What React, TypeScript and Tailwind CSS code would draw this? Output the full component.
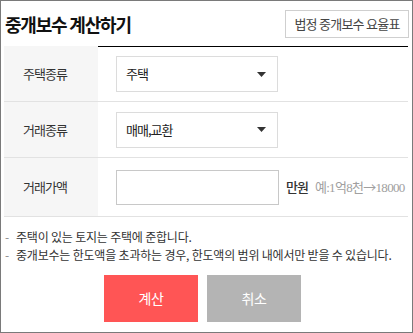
import React from 'react'

const ko = { fontFamily: '"Noto Sans CJK KR", "Noto Sans", sans-serif' }

function Caret() {
    return (
        <svg width="9" height="5" viewBox="0 0 9 5" className="block">
            <path d="M0 0h9L4.5 5z" fill="#333" />
        </svg>
    )
}

function SelectBox({ value }: { value: string }) {
    return (
        <div className="w-[162px] h-[36px] border border-[#dcdcdc] bg-white flex items-center justify-between pl-[9px] pr-[11px]">
            <span className="text-[13px] tracking-[-1px] text-[#222]">{value}</span>
            <Caret />
        </div>
    )
}

function Row({ label, h, children, top }: { label: string; h: string; children: React.ReactNode; top?: boolean }) {
    return (
        <div className={`flex ${h} border-b border-[#e2e2e2]`}>
            <div className="w-[94px] bg-[#f6f6f6] flex items-center pl-[19px] text-[13px] tracking-[-1px] text-[#333]">
                {label}
            </div>
            <div className={`flex-1 flex items-center pl-[18px] ${top ? 'border-t border-black' : ''}`}>
                {children}
            </div>
        </div>
    )
}

export default function App() {
    return (
        <div style={ko} className="w-[413px] h-[333px] border border-[#7a7a7a] bg-white pl-[3px] pr-[4px] text-[#333]">
            {/* Header */}
            <div className="flex items-center justify-between h-[45px] pt-[1px]">
                <h1 className="pl-[1px] text-[18px] font-bold tracking-[-1.2px] text-[#111]">중개보수 계산하기</h1>
                <button className="h-[28px] w-[124px] border border-[#cfcfcf] bg-white text-[13px] tracking-[-0.75px] text-[#444] -mr-[1px]">
                    법정 중개보수 요율표
                </button>
            </div>

            {/* Form table */}
            <div>
                <Row label="주택종류" h="h-[56px]" top>
                    <SelectBox value="주택" />
                </Row>
                <Row label="거래종류" h="h-[56px]">
                    <SelectBox value="매매,교환" />
                </Row>
                <Row label="거래가액" h="h-[59px]">
                    <div className="w-[163px] h-[35px] border border-[#c8c8c8] bg-white" />
                    <span className="ml-[7px] text-[13px] font-medium tracking-[-1px] text-[#333]">만원</span>
                    <span className="ml-[7px] text-[13px] tracking-[-0.7px] text-[#a0a0a0]" style={{ fontFamily: '"Liberation Serif", "Noto Sans CJK KR", serif' }}>
                        예:1억8천<span style={ko}>→</span>18000
                    </span>
                </Row>
            </div>

            {/* Notes */}
            <ul className="mt-[11px] text-[12px] tracking-[-0.2px] leading-[18px] text-[#333]">
                <li className="flex">
                    <span className="w-[12px] pl-[1px] text-[#888]">-</span>
                    <span>주택이 있는 토지는 주택에 준합니다.</span>
                </li>
                <li className="flex">
                    <span className="w-[12px] pl-[1px] text-[#888]">-</span>
                    <span>중개보수는 한도액을 초과하는 경우, 한도액의 범위 내에서만 받을 수 있습니다.</span>
                </li>
            </ul>

            {/* Buttons */}
            <div className="flex justify-center gap-[9px] mt-[11px] pr-[7px]">
                <button className="w-[94px] h-[47px] bg-[#ff5555] text-white text-[14px] tracking-[-0.5px]">계산</button>
                <button className="w-[94px] h-[47px] bg-[#b4b4b4] text-white text-[14px] tracking-[-0.5px]">취소</button>
            </div>
        </div>
    )
}
